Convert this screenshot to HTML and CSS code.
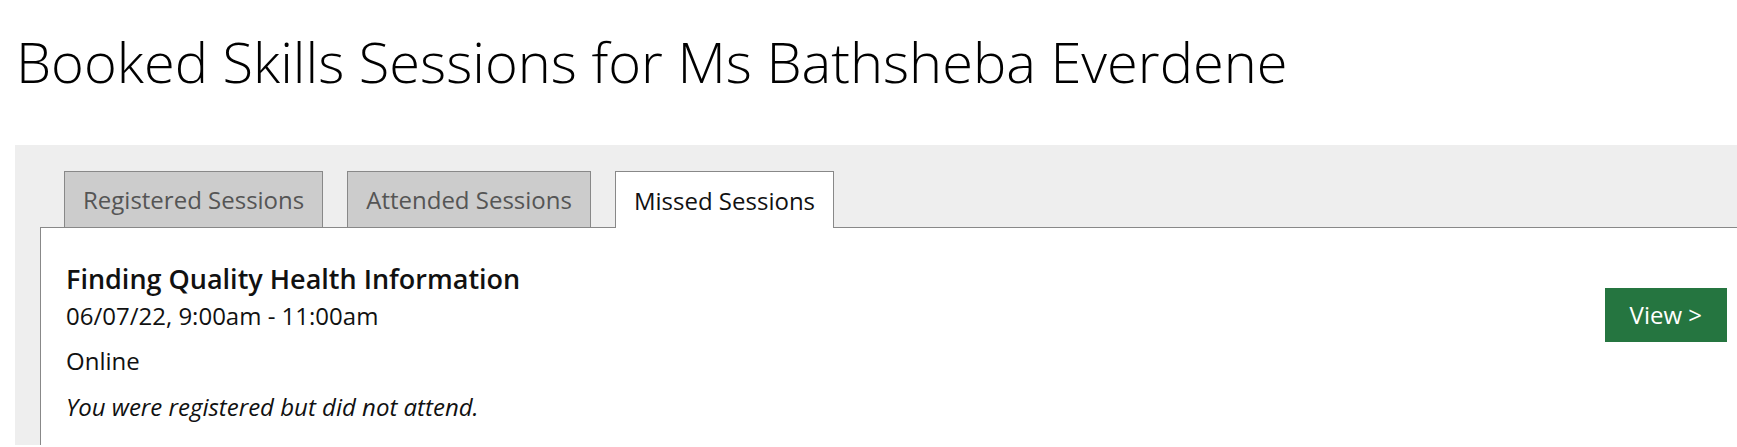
FILE: index.html
```html
<!DOCTYPE html>
<html lang="en">
<head>
<meta charset="utf-8">
<title>Booked Skills Sessions</title>
<link rel="stylesheet" href="styles.css">
</head>
<body>
<h1 class="page-title">Booked Skills Sessions for Ms Bathsheba Everdene</h1>
<div class="panel">
  <div class="tabs">
    <div class="tab">Registered Sessions</div>
    <div class="tab">Attended Sessions</div>
    <div class="tab tab-active">Missed Sessions</div>
  </div>
  <div class="tab-content">
    <div class="session">
      <div class="session-info">
        <h2 class="session-title">Finding Quality Health Information</h2>
        <p class="session-date">06/07/22, 9:00am - 11:00am</p>
        <p class="session-location">Online</p>
        <p class="session-note">You were registered but did not attend.</p>
      </div>
      <a class="view-btn" href="#">View &gt;</a>
    </div>
  </div>
</div>
</body>
</html>
```

FILE: styles.css
```css
html, body {
  margin: 0;
  padding: 0;
  background: #fff;
  overflow: hidden;
}
body {
  font-family: "Open Sans", "Noto Sans", sans-serif;
  color: #111;
}
.page-title {
  font-size: 56px;
  font-weight: 300;
  line-height: 1.2;
  margin: 0;
  padding: 28px 0 0 16px;
  height: 125px;
  box-sizing: border-box;
  color: #000;
}
.panel {
  background: #eee;
  margin: 20px -60px 0 15px;
  padding: 26px 0 0 25px;
}
.tabs {
  display: flex;
  gap: 24px;
  padding-left: 24px;
}
.tab {
  background: #ccc;
  color: #555;
  border: 1px solid #888;
  border-bottom: none;
  font-size: 24px;
  height: 56px;
  box-sizing: border-box;
  padding: 0 18px;
  display: flex;
  align-items: center;
}
.tab-active {
  background: #fff;
  color: #111;
  position: relative;
  margin-bottom: -1px;
  height: 57px;
  z-index: 1;
}
.tab-content {
  background: #fff;
  border-top: 1px solid #888;
  border-left: 1px solid #888;
  padding: 31px 70px 20px 25px;
}
.session {
  display: flex;
  justify-content: space-between;
  align-items: flex-start;
}
.session-title {
  font-size: 27px;
  font-weight: 600;
  margin: 0;
  line-height: 39px;
}
.session-date, .session-location, .session-note {
  font-size: 24px;
  margin: 0;
  line-height: 36px;
}
.session-location {
  margin-top: 9px;
}
.session-note {
  margin-top: 10px;
  font-style: italic;
}
.view-btn {
  background: #257540;
  color: #fff;
  text-decoration: none;
  font-size: 24px;
  line-height: 54px;
  padding: 0 25px;
  margin-top: 29px;
}
```
